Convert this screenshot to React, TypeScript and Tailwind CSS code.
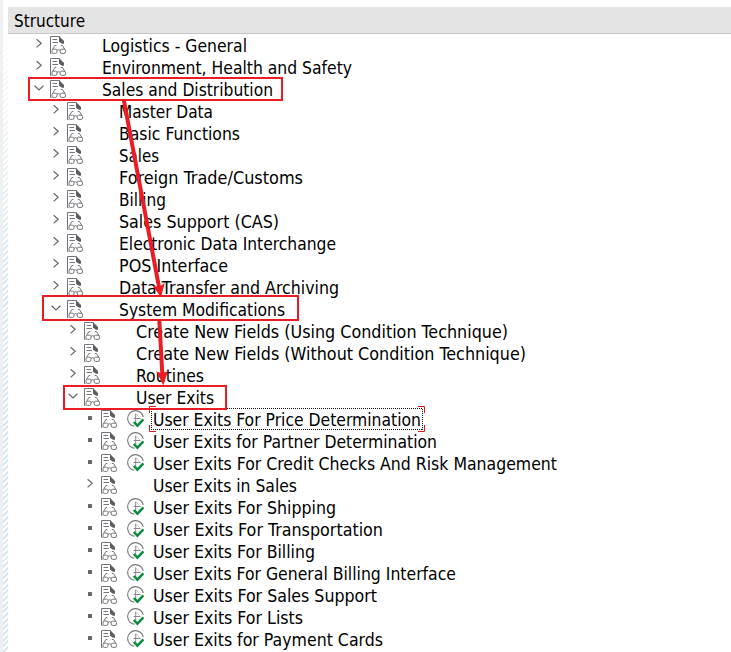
type Kind = "closed" | "open" | "leaf";
type Row = { level: number; kind: Kind; text: string; width: number; run?: boolean; focused?: boolean };

const rows: Row[] = [
  { level: 0, kind: "closed", text: "Logistics - General", width: 145 },
  { level: 0, kind: "closed", text: "Environment, Health and Safety", width: 250 },
  { level: 0, kind: "open", text: "Sales and Distribution", width: 171 },
  { level: 1, kind: "closed", text: "Master Data", width: 94 },
  { level: 1, kind: "closed", text: "Basic Functions", width: 121 },
  { level: 1, kind: "closed", text: "Sales", width: 40 },
  { level: 1, kind: "closed", text: "Foreign Trade/Customs", width: 184 },
  { level: 1, kind: "closed", text: "Billing", width: 47 },
  { level: 1, kind: "closed", text: "Sales Support (CAS)", width: 160 },
  { level: 1, kind: "closed", text: "Electronic Data Interchange", width: 217 },
  { level: 1, kind: "closed", text: "POS Interface", width: 109 },
  { level: 1, kind: "closed", text: "Data Transfer and Archiving", width: 220 },
  { level: 1, kind: "open", text: "System Modifications", width: 166 },
  { level: 2, kind: "closed", text: "Create New Fields (Using Condition Technique)", width: 372 },
  { level: 2, kind: "closed", text: "Create New Fields (Without Condition Technique)", width: 390 },
  { level: 2, kind: "closed", text: "Routines", width: 68 },
  { level: 2, kind: "open", text: "User Exits", width: 78 },
  { level: 3, kind: "leaf", text: "User Exits For Price Determination", width: 268, run: true, focused: true },
  { level: 3, kind: "leaf", text: "User Exits for Partner Determination", width: 284, run: true },
  { level: 3, kind: "leaf", text: "User Exits For Credit Checks And Risk Management", width: 404, run: true },
  { level: 3, kind: "closed", text: "User Exits in Sales", width: 144 },
  { level: 3, kind: "leaf", text: "User Exits For Shipping", width: 183, run: true },
  { level: 3, kind: "leaf", text: "User Exits For Transportation", width: 230, run: true },
  { level: 3, kind: "leaf", text: "User Exits For Billing", width: 162, run: true },
  { level: 3, kind: "leaf", text: "User Exits For General Billing Interface", width: 303, run: true },
  { level: 3, kind: "leaf", text: "User Exits For Sales Support", width: 224, run: true },
  { level: 3, kind: "leaf", text: "User Exits For Lists", width: 150, run: true },
  { level: 3, kind: "leaf", text: "User Exits for Payment Cards", width: 230, run: true },
];

const indents = ["pl-[33px]", "pl-[50px]", "pl-[67px]", "pl-[84px]"];

function Marker({ kind }: { kind: Kind }) {
  return (
    <svg className="h-[22px] w-[12px] shrink-0" viewBox="0 0 12 22" fill="none" stroke="#666" strokeWidth="1.2">
      {kind === "closed" && <path d="M3.6 4.2 8.2 8.3 3.6 12.4" />}
      {kind === "open" && <path d="M1.6 6.8 6 11 10.4 6.8" />}
      {kind === "leaf" && <rect x="4" y="7" width="4" height="4" rx="0.5" fill="#666" stroke="none" />}
    </svg>
  );
}

function DocIcon() {
  return (
    <svg className="ml-[5px] h-[22px] w-[17px] shrink-0" viewBox="0 0 17 22" fill="none" stroke="#74747a" strokeWidth="1">
      <path d="M1.5 18.5H.5V1.5H9.5" />
      <path d="M9 1 14 6V8.7H12L9 6.8Z" fill="#5c5e64" stroke="none" />
      <path d="M2.5 4.5H7M2.5 7.5H8" />
      <path d="M6.3 10.5H4.9L2.5 14.6M10.8 10.5H12.5L14.9 14.6" />
      <rect x="2" y="14.2" width="5" height="4.2" rx="1.5" />
      <rect x="10.2" y="14.2" width="5.3" height="4.2" rx="1.5" />
      <path d="M7 15.3Q8.6 14.1 10.2 15.3" />
    </svg>
  );
}

function RunIcon() {
  return (
    <svg className="ml-[9px] h-[22px] w-[18px] shrink-0" viewBox="0 0 18 22" fill="none">
      <path d="M7.4 17.3A7.9 7.9 0 1 1 16.3 8" stroke="#77777c" strokeWidth="1.1" />
      <path d="M8.7 4.5V14M6.5 9.5H13.5" stroke="#88888c" strokeWidth="1" />
      <path d="M9 5 12.5 8.5" stroke="#b4b4b8" strokeWidth="0.7" />
      <path d="M6.8 13 10.4 16.7 16.4 10.4" stroke="#078b3d" strokeWidth="2.4" />
    </svg>
  );
}

function FocusFrame() {
  return (
    <svg className="absolute -left-[4px] -top-[3px] h-[26px] w-[276px]" viewBox="0 0 276 26" fill="none">
      <path d="M2 2.5H274M2 23.5H274M2.5 3V24M273.5 3V24" stroke="#111" strokeDasharray="1 1" strokeWidth="1" />
      <path d="M7 .5H.5V7M269 .5H275.5V7M.5 19V25.5H7M275.5 19V25.5H269" stroke="#d51a20" />
    </svg>
  );
}

function TreeRow({ row }: { row: Row }) {
  return (
    <div className={`flex h-[22px] shrink-0 ${indents[row.level]}`}>
      <Marker kind={row.kind} />
      <DocIcon />
      {row.run ? <RunIcon /> : <span className="w-[27px] shrink-0" />}
      <span className="relative ml-[8px] flex h-[22px] shrink-0">
        {row.focused && <FocusFrame />}
        <svg className="h-[22px] overflow-visible" width={row.width} height="22">
          <text x="0" y="17" textLength={row.width} lengthAdjust="spacingAndGlyphs" fill="#000">{row.text}</text>
        </svg>
      </span>
    </div>
  );
}

function Annotations() {
  return (
    <svg className="pointer-events-none absolute left-0 top-0 h-[652px] w-[731px]" viewBox="0 0 731 652" fill="none" stroke="#ed1c24">
      <g strokeWidth="2">
        <rect x="29" y="78" width="253" height="22" />
        <rect x="43" y="296" width="255" height="24" />
        <rect x="64" y="386" width="162" height="23" />
      </g>
      <path d="M123.8 100 159 287M159.3 320 162.3 374" strokeWidth="4" />
      <path d="M152.5 285.5 159 287 164.7 283 161 297.5ZM156.3 371.5 162.3 373.5 168 371 163.3 385.5Z" fill="#ed1c24" stroke="none" />
    </svg>
  );
}

export default function App() {
  return (
    <div className="relative flex h-[652px] w-[731px] overflow-hidden bg-white text-[17px] [font-family:'DejaVu_Sans_Condensed','DejaVu_Sans',sans-serif] [font-stretch:condensed]">
      <div className="w-[3px] shrink-0 bg-[#f0f0f0]" />
      <div className="w-[5px] shrink-0 bg-[repeating-linear-gradient(135deg,#d5e8f3_0px,#d5e8f3_2px,#ffffff_2px,#ffffff_4px)] [mask-image:linear-gradient(to_bottom,transparent,black_300px)]" />
      <main className="flex min-w-0 flex-1 flex-col pt-[7px]">
        <header className="mb-px flex h-[27px] shrink-0 items-center border-b border-[#c6c6c6] bg-[#e4e4e4] pl-[6px] pt-[3px] text-[17px]">Structure</header>
        <section className="-ml-[8px] flex flex-col">
          {rows.map((row) => <TreeRow key={row.text} row={row} />)}
        </section>
      </main>
      <Annotations />
    </div>
  );
}
